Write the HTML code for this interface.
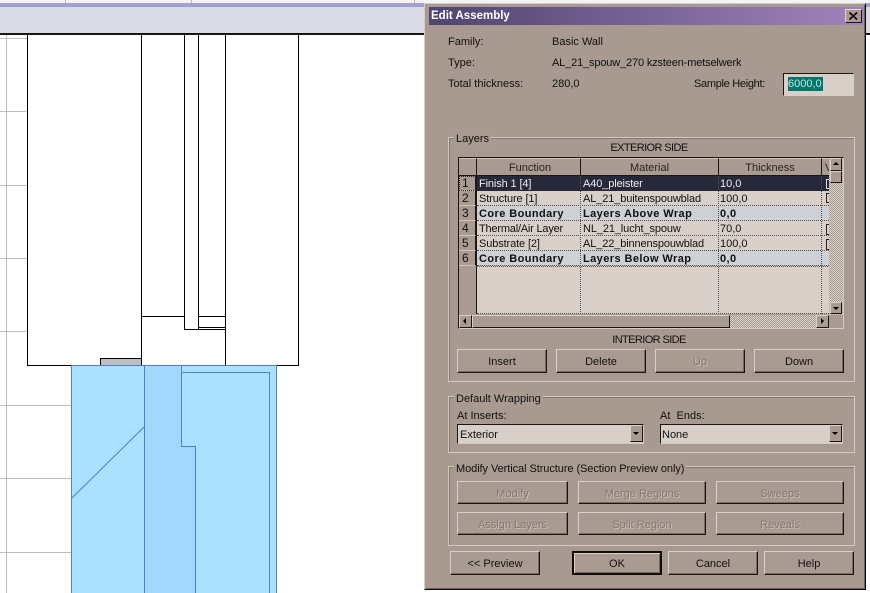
<!DOCTYPE html>
<html><head><meta charset="utf-8"><style>
html,body{margin:0;padding:0;width:870px;height:593px;overflow:hidden;background:#fff}
body{position:relative;font:11px/13px "Liberation Sans",sans-serif;color:#111}
div,span{position:absolute;box-sizing:border-box;white-space:nowrap}
.l{height:13px}
.b{background:#a99b91;border:1px solid;border-color:#d9d1c9 #1d1512 #1d1512 #d9d1c9;box-shadow:inset -1px -1px 0 #76695f;text-align:center;line-height:24px;font-size:11px}
.d{color:#cfc6bd;text-shadow:none}
.d i{font-style:normal;color:#85786e;text-shadow:1px 1px 0 #c9c0b7}
.g{border:1px solid #d2c9c0;box-shadow:inset 1px 1px 0 #85786e}
.gl{background:#a99b91;padding:0 2px;height:13px}
.h{top:158px;height:18px;background:#a99b91;border-right:1px solid #1d1512;border-top:1px solid #cdc4bb;text-align:center;line-height:19px;border-bottom:1px solid #1d1512;color:#2a2320}
.r{left:477px;width:352px;height:15px;background:#d8cfc8;border-bottom:1px dotted #55504c}
.rb{background:#cdd0d4;font-weight:bold;letter-spacing:.42px}
.c{top:1px;height:14px;line-height:14px}
.t{letter-spacing:-.12px}
.n{left:459px;width:17px;height:15px;background:#a99b91;border-bottom:1px solid #cdc4bb;line-height:14px;font-size:12px;padding-left:3px;border-right:1px solid #1d1512}
.v{width:1px;background:#55504c}
.sb{background:#a99b91;border:1px solid;border-color:#d9d1c9 #1d1512 #1d1512 #d9d1c9}
.tri{width:0;height:0;border-style:solid}
</style></head><body>
<!-- drawing -->
<div style="left:0;top:0;width:870px;height:3px;background:#f4f4f6"></div>
<div style="left:65px;top:0;width:1px;height:3px;background:#bbb"></div>
<div style="left:191px;top:0;width:1px;height:3px;background:#bbb"></div>
<div style="left:414px;top:0;width:1px;height:3px;background:#bbb"></div>
<div style="left:0;top:3px;width:870px;height:4px;background:#9fa1cf"></div>
<div style="left:0;top:7px;width:870px;height:26px;background:#d9dae3"></div>
<div style="left:0;top:33px;width:870px;height:2px;background:#1a1416"></div>
<svg style="position:absolute;left:0;top:0" width="870" height="593" shape-rendering="crispEdges">
<g stroke="#bdbdbd" fill="none"><path d="M6.5 35V593M0 38.5H27M0 111.5H27M0 185.5H27M0 258.5H27M0 331.5H27M0 405.5H71M0 478.5H71M0 552.5H71"/></g>
<rect x="100" y="358" width="41" height="7" fill="#bfbfbf" stroke="#000" stroke-width="0"/>
<path d="M100.5 365V358.5H141" stroke="#000" fill="none"/>
<g stroke="#000" fill="none"><path d="M27.5 34V365.5H298.5V34M141.5 34V365M225.5 34V365M184.5 34V329.5H198.5V34M141 316.5H184M198 316.5H225M198 327.5H225M198 329.5H225"/></g>
<rect x="71" y="365" width="206" height="228" fill="#a9e1ff"/>
<path d="M144 365H181V446H195V593H144Z" fill="#a2d8fd"/>
<g stroke="#4a7fdb" fill="none"><path d="M71.5 593V365.5H276.5V593M144.5 365V593M181.5 365V446.5H195.5V593M181 372.5H269.5V593"/></g>
<path d="M72 498L144 427" stroke="#4a7fdb" fill="none" shape-rendering="auto"/>
</svg>
<!-- dialog -->
<div style="left:424px;top:3px;width:442px;height:587px;background:#a89a90;border:1px solid;border-color:#d6cec6 #0c0808 #0c0808 #d6cec6;box-shadow:inset 1px 1px 0 #a89a90,inset -1px -1px 0 #6e625a,inset 3px 3px 0 #a89a90"></div>
<div style="left:429px;top:7px;width:435px;height:18px;background:linear-gradient(90deg,#4e4570,#a283bb);color:#fff;font:bold 11.5px/18px 'Liberation Sans',sans-serif;padding-left:2px">Edit Assembly</div>
<div style="left:845px;top:9px;width:17px;height:14px;background:#a99b91;border:1px solid;border-color:#e0d8d0 #1d1512 #1d1512 #e0d8d0"></div>
<svg style="position:absolute;left:849px;top:12px" width="9" height="8"><path d="M0.5 0.5L8 7.5M8 0.5L0.5 7.5" stroke="#000" stroke-width="1.6"/></svg>

<div class="l" style="left:448px;top:36px">Family:</div><div class="l" style="left:552px;top:36px">Basic Wall</div>
<div class="l" style="left:448px;top:57px">Type:</div><div class="l" style="left:552px;top:57px;letter-spacing:-.15px">AL_21_spouw_270 kzsteen-metselwerk</div>
<div class="l" style="left:448px;top:78px">Total thickness:</div><div class="l" style="left:552px;top:78px">280,0</div>
<div class="l" style="left:694px;top:78px;letter-spacing:-.3px">Sample Height:</div>
<div style="left:783px;top:73px;width:71px;height:23px;background:#d8cfc8;border:1px solid;border-color:#1d1512 #d9d1c9 #d9d1c9 #1d1512"></div>
<div style="left:788px;top:77px;width:35px;height:14px;background:#00766e;color:#bfe5df;line-height:14px;overflow:hidden;padding-left:0">6000,0</div>

<!-- Layers -->
<div class="g" style="left:448px;top:137px;width:407px;height:245px"></div>
<div class="gl" style="left:454px;top:133px">Layers</div>
<div class="l" style="left:449px;width:400px;text-align:center;top:142px;letter-spacing:-.6px">EXTERIOR SIDE</div>
<div style="left:458px;top:157px;width:386px;height:172px;background:#a99b91;border:1px solid;border-color:#1d1512 #d2c9c0 #d2c9c0 #1d1512"></div>
<div style="left:459px;top:176px;width:18px;height:138px;background:#a99b91;border-right:1px solid #1d1512"></div>
<div style="left:477px;top:176px;width:352px;height:138px;background:#d8cfc8;border-bottom:1px dotted #55504c"></div>
<div class="h" style="left:459px;width:18px"></div>
<div class="h" style="left:477px;width:104px;padding-left:3px">Function</div>
<div class="h" style="left:581px;width:138px">Material</div>
<div class="h" style="left:719px;width:103px">Thickness</div>
<div class="h" style="left:822px;width:8px;text-align:left;padding-left:3px;overflow:hidden">V</div>

<div class="r" style="top:176px;background:#27293a;color:#eee;border-bottom:none"><span class="c t" style="left:2px">Finish 1 [4]</span><span class="c t" style="left:106px">A40_pleister</span><span class="c" style="left:243px">10,0</span><span style="left:349px;top:3px;width:3px;height:10px;border:1px solid #ddd;border-right:none"></span></div>
<div class="r" style="top:191px"><span class="c t" style="left:2px">Structure [1]</span><span class="c t" style="left:106px">AL_21_buitenspouwblad</span><span class="c" style="left:243px">100,0</span><span style="left:349px;top:2px;width:3px;height:10px;border:1px solid #222;border-right:none"></span></div>
<div class="r rb" style="top:206px"><span class="c" style="left:2px">Core Boundary</span><span class="c" style="left:106px">Layers Above Wrap</span><span class="c" style="left:243px">0,0</span></div>
<div class="r" style="top:221px"><span class="c t" style="left:2px;letter-spacing:-.2px">Thermal/Air Layer</span><span class="c t" style="left:106px">NL_21_lucht_spouw</span><span class="c" style="left:243px">70,0</span><span style="left:349px;top:3px;width:3px;height:11px;border:1px solid #222;border-right:none"></span></div>
<div class="r" style="top:236px"><span class="c t" style="left:2px">Substrate [2]</span><span class="c t" style="left:106px">AL_22_binnenspouwblad</span><span class="c" style="left:243px">100,0</span><span style="left:349px;top:3px;width:3px;height:11px;border:1px solid #222;border-right:none"></span></div>
<div class="r rb" style="top:251px"><span class="c" style="left:2px">Core Boundary</span><span class="c" style="left:106px">Layers Below Wrap</span><span class="c" style="left:243px">0,0</span></div>
<div class="n" style="top:176px;outline:1px dotted #222;outline-offset:-1px">1</div><div class="n" style="top:191px">2</div><div class="n" style="top:206px">3</div><div class="n" style="top:221px">4</div><div class="n" style="top:236px">5</div><div class="n" style="top:251px">6</div>
<div style="left:476px;top:266px;width:354px;height:1px;border-top:1px dotted #55504c"></div>
<div style="left:580px;top:176px;height:138px;width:0;border-left:1px dotted #55504c"></div>
<div style="left:718px;top:176px;height:138px;width:0;border-left:1px dotted #55504c"></div>
<div style="left:821px;top:176px;height:138px;width:0;border-left:1px dotted #55504c"></div>
<!-- scrollbars -->
<div style="left:829px;top:158px;width:14px;height:157px;background:repeating-conic-gradient(#a99b91 0 25%,#d8cfc8 0 50%) 0 0/2px 2px"></div>
<div class="sb" style="left:830px;top:158px;width:12px;height:13px"></div><div class="tri" style="left:833px;top:162px;border-width:0 3px 3px;border-color:transparent transparent #000"></div>
<div class="sb" style="left:830px;top:171px;width:12px;height:12px"></div>
<div class="sb" style="left:830px;top:302px;width:12px;height:12px"></div><div class="tri" style="left:833px;top:307px;border-width:3px 3px 0;border-color:#000 transparent transparent"></div>
<div style="left:459px;top:315px;width:370px;height:13px;background:repeating-conic-gradient(#a99b91 0 25%,#d8cfc8 0 50%) 0 0/2px 2px"></div>
<div class="sb" style="left:459px;top:315px;width:13px;height:13px"></div><div class="tri" style="left:463px;top:318px;border-width:3px 3px 3px 0;border-color:transparent #000"></div>
<div class="sb" style="left:472px;top:315px;width:258px;height:13px"></div>
<div class="sb" style="left:816px;top:315px;width:13px;height:13px"></div><div class="tri" style="left:821px;top:318px;border-width:3px 0 3px 3px;border-color:transparent #000"></div>

<div class="l" style="left:449px;width:400px;text-align:center;top:334px;letter-spacing:-.6px">INTERIOR SIDE</div>
<div class="b" style="left:457px;top:349px;width:90px;height:24px">Insert</div>
<div class="b" style="left:556px;top:349px;width:90px;height:24px">Delete</div>
<div class="b d" style="left:655px;top:349px;width:90px;height:24px"><i>Up</i></div>
<div class="b" style="left:754px;top:349px;width:90px;height:24px">Down</div>

<!-- Wrapping -->
<div class="g" style="left:448px;top:396px;width:407px;height:57px"></div>
<div class="gl" style="left:454px;top:393px">Default Wrapping</div>
<div class="l" style="left:457px;top:410px">At Inserts:</div>
<div class="l" style="left:660px;top:410px">At&nbsp; Ends:</div>
<div style="left:457px;top:424px;width:187px;height:20px;background:#d8cfc8;border:1px solid;border-color:#1d1512 #d2c9c0 #d2c9c0 #1d1512;line-height:20px;padding-left:2px">Exterior</div>
<div class="sb" style="left:630px;top:425px;width:13px;height:17px"></div><div class="tri" style="left:633px;top:432px;border-width:3px 3px 0;border-color:#000 transparent transparent"></div>
<div style="left:660px;top:424px;width:183px;height:20px;background:#d8cfc8;border:1px solid;border-color:#1d1512 #d2c9c0 #d2c9c0 #1d1512;line-height:20px;padding-left:1px">None</div>
<div class="sb" style="left:829px;top:425px;width:13px;height:17px"></div><div class="tri" style="left:832px;top:432px;border-width:3px 3px 0;border-color:#000 transparent transparent"></div>

<!-- Modify -->
<div class="g" style="left:448px;top:466px;width:407px;height:80px"></div>
<div class="gl" style="left:454px;top:463px;letter-spacing:-.07px">Modify Vertical Structure (Section Preview only)</div>
<div class="b d" style="left:457px;top:481px;width:111px;height:23px"><i>Modify</i></div>
<div class="b d" style="left:578px;top:481px;width:128px;height:23px"><i>Merge Regions</i></div>
<div class="b d" style="left:716px;top:481px;width:128px;height:23px"><i>Sweeps</i></div>
<div class="b d" style="left:457px;top:512px;width:111px;height:23px"><i>Assign Layers</i></div>
<div class="b d" style="left:578px;top:512px;width:128px;height:23px"><i>Split Region</i></div>
<div class="b d" style="left:716px;top:512px;width:128px;height:23px"><i>Reveals</i></div>

<div class="b" style="left:450px;top:551px;width:90px;height:24px">&lt;&lt; Preview</div>
<div class="b" style="left:572px;top:551px;width:90px;height:24px;border:2px solid #120c0a;line-height:22px;box-shadow:inset 1px 1px 0 #d9d1c9,inset -1px -1px 0 #76695f">OK</div>
<div class="b" style="left:668px;top:551px;width:90px;height:24px">Cancel</div>
<div class="b" style="left:764px;top:551px;width:90px;height:24px">Help</div>
</body></html>
